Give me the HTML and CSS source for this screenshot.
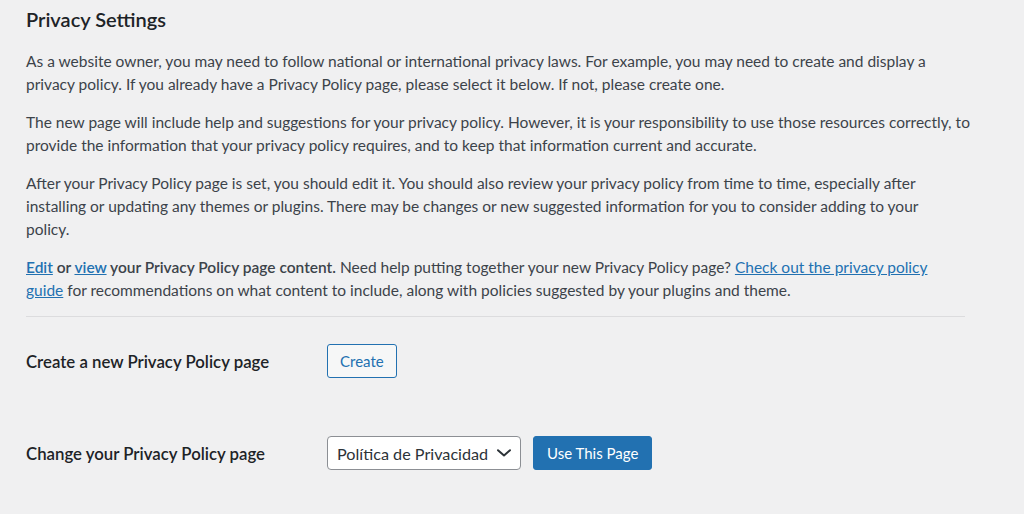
FILE: index.html
```html
<!DOCTYPE html>
<html lang="en">
<head>
<meta charset="utf-8">
<title>Privacy Settings</title>
<link rel="stylesheet" href="styles.css">
</head>
<body>
<div class="wrap">
  <h2 class="title">Privacy Settings</h2>
  <p>As a website owner, you may need to follow national or international privacy laws. For example, you may need to create and display a privacy policy. If you already have a Privacy Policy page, please select it below. If not, please create one.</p>
  <p>The new page will include help and suggestions for your privacy policy. However, it is your responsibility to use those resources correctly, to provide the information that your privacy policy requires, and to keep that information current and accurate.</p>
  <p>After your Privacy Policy page is set, you should edit it. You should also review your privacy policy from time to time, especially after installing or updating any themes or plugins. There may be changes or new suggested information for you to consider adding to your<br>policy.</p>
  <p><strong><a href="#">Edit</a> or <a href="#">view</a> your Privacy Policy page content.</strong> Need help putting together your new Privacy Policy page? <a href="#">Check out the privacy policy<br>guide</a> for recommendations on what content to include, along with policies suggested by your plugins and theme.</p>
  <hr class="sep">
  <div class="form">
    <div class="row row-create">
      <div class="label">Create a new Privacy Policy page</div>
      <div class="field">
        <button class="btn btn-secondary" type="button">Create</button>
      </div>
    </div>
    <div class="row row-change">
      <div class="label">Change your Privacy Policy page</div>
      <div class="field">
        <div class="select">
          <span class="select-text">Política de Privacidad</span>
          <svg class="chev" width="14" height="8" viewBox="0 0 14 8"><path d="M1 1.2 L7 6.5 L13 1.2" fill="none" stroke="#2c3338" stroke-width="2" stroke-linecap="round" stroke-linejoin="round"/></svg>
        </div>
        <button class="btn btn-primary" type="button">Use This Page</button>
      </div>
    </div>
  </div>
</div>
</body>
</html>
```
FILE: styles.css
```css
html, body {
  margin: 0;
  padding: 0;
  background: #f0f0f1;
}
body {
  font-family: Lato, "Noto Sans", sans-serif;
  font-size: 15.5px;
  color: #3c434a;
}
.wrap {
  width: 945px;
  padding: 7px 0 0 26px;
}
.title {
  margin: 0;
  font-size: 20px;
  line-height: 25px;
  font-weight: 600;
  color: #1d2327;
}
p {
  margin: 18px 0 0;
  line-height: 23px;
}
p + p {
  margin-top: 15px;
}
a {
  color: #2271b1;
  text-decoration: underline;
}
strong {
  font-weight: 600;
}
.sep {
  width: 939px;
  margin: 14px 0 0;
  border: 0;
  border-top: 1px solid #dcdcde;
  height: 0;
}
.form {
  display: flex;
  flex-direction: column;
}
.row {
  display: flex;
  align-items: center;
}
.row-create {
  margin-top: 27px;
  height: 34px;
}
.row-change {
  margin-top: 58px;
  height: 34px;
}
.label {
  width: 301px;
  font-size: 16.8px;
  font-weight: 600;
  color: #1d2327;
}
.field {
  display: flex;
  align-items: center;
  gap: 12px;
}
.btn {
  font-family: inherit;
  font-size: 15px;
  height: 34px;
  border-radius: 3px;
  padding: 0 13px;
  cursor: pointer;
}
.btn-secondary {
  background: #f6f7f7;
  border: 1px solid #2271b1;
  color: #2271b1;
  padding: 0 12px;
}
.btn-primary {
  background: #2271b1;
  border: 1px solid #2271b1;
  color: #fff;
}
.select {
  box-sizing: border-box;
  width: 194px;
  height: 34px;
  border: 1px solid #8c8f94;
  border-radius: 4px;
  background: #fff;
  display: flex;
  align-items: center;
  justify-content: space-between;
  padding: 0 9px 0 9px;
  font-size: 16.2px;
  color: #2c3338;
}
.chev {
  display: block;
}
```
